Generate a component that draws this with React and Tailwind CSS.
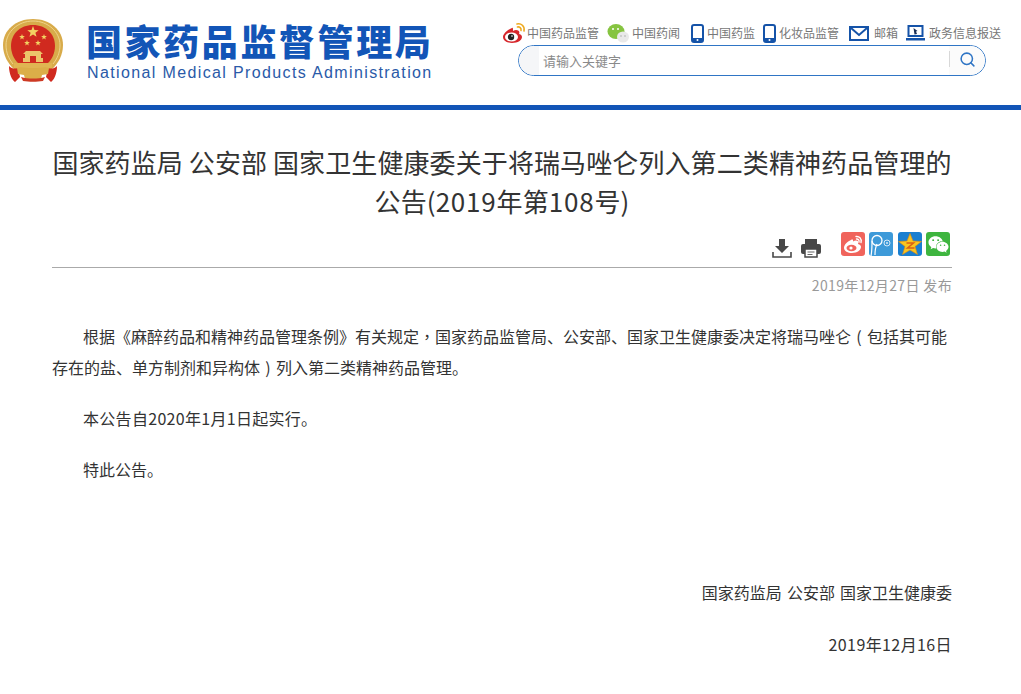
import { FaWeixin } from "react-icons/fa";
import { Search } from "lucide-react";

const cjk = "font-['Microsoft_YaHei','Noto_Sans_CJK_SC',sans-serif]";

// five pointed star, used by the emblem
const starPoints = (cx, cy, r) =>
    Array.from({ length: 10 }, (_, i) => {
        const radius = i % 2 === 0 ? r : r * 0.42;
        const angle = (Math.PI / 5) * i - Math.PI / 2;
        return `${cx + radius * Math.cos(angle)},${cy + radius * Math.sin(angle)}`;
    }).join(" ");

const Emblem = () => (
    <svg width="60" height="66" viewBox="0 0 60 66" className="shrink-0">
        <path d="M30 1C13 1 0 12 0 27c0 10 5 19 11 24h38c6-5 11-14 11-24C60 12 47 1 30 1z" fill="#d8ab4a" />
        <path d="M30 3C15 3 3 14 3 27c0 8 3 14 7 19" fill="none" stroke="#efd48a" strokeWidth="1" />
        <path d="M30 3c15 0 27 11 27 24 0 8-3 14-7 19" fill="none" stroke="#efd48a" strokeWidth="1" />
        <path d="M30 7C17 7 8 16 8 28c0 7 3 13 7 17h30c4-4 7-10 7-17C52 16 43 7 30 7z" fill="#d02a1f" />
        <polygon points={starPoints(30, 14, 6)} fill="#f2d262" />
        <polygon points={starPoints(19, 19, 3)} fill="#f2d262" />
        <polygon points={starPoints(41, 19, 3)} fill="#f2d262" />
        <polygon points={starPoints(24, 25, 3)} fill="#f2d262" />
        <polygon points={starPoints(35, 25, 3)} fill="#f2d262" />
        <path d="M20 44v-4h2v-4h-2l3-3h14l3 3h-2v4h2v4z" fill="#ecc56a" />
        <rect x="27" y="38" width="6" height="6" fill="#d02a1f" />
        <path d="M11 45h38v5H11z" fill="#e0b552" />
        <path d="M6 48c3 3 6 3 9 2l2 9-5 5c-3-2-6-8-6-16z" fill="#d02a1f" />
        <path d="M54 48c-3 3-6 3-9 2l-2 9 5 5c3-2 6-8 6-16z" fill="#d02a1f" />
        <path d="M14 50c5-2 11 1 16 0 5 1 11-2 16 0l-1 6-6 1-1 4H22l-1-4-6-1z" fill="#dbae48" />
        <path d="M18 59c7 2 17 2 24 0l-2 4c-6 1-14 1-20 0z" fill="#cd3a24" />
    </svg>
);

const Phone = () => (
    <svg width="13" height="19" viewBox="0 0 13 19" className="shrink-0">
        <rect x="1" y="1" width="11" height="17" rx="2" fill="#fff" stroke="#1553a8" strokeWidth="2" />
        <rect x="1" y="14" width="11" height="4" fill="#1553a8" />
        <circle cx="6.5" cy="16" r="1" fill="#fff" />
    </svg>
);

const Weibo = () => (
    <svg width="24" height="22" viewBox="0 0 24 22" className="shrink-0">
        <path d="M10 6C5 8 1 12 1 15c0 4 5 6 9 6 6 0 10-3 10-6 0-2-2-3-3-3 1-2 0-4-3-4-1 0-2 .5-3 1 0-2 0-4-1-3z" fill="#d6262b" />
        <ellipse cx="9.500" cy="15" rx="6.500" ry="4.500" fill="#fff" />
        <circle cx="9" cy="15" r="3.200" fill="#222" />
        <circle cx="10" cy="14" r=".8" fill="#fff" />
        <path d="M15 2c4-1 8 2 7 7M15.500 5c2-.5 4 1 3.500 3.500" fill="none" stroke="#eeaa1f" strokeWidth="1.600" strokeLinecap="round" />
    </svg>
);

const Wechat = () => (
    <svg width="23" height="21" viewBox="0 0 23 21" className="shrink-0">
        <ellipse cx="9" cy="8.500" rx="8.500" ry="7.500" fill="#86c440" />
        <circle cx="6" cy="6" r="1" fill="#fff" />
        <circle cx="11" cy="6" r="1" fill="#fff" />
        <ellipse cx="16" cy="14" rx="6" ry="5.500" fill="#e9e9e9" />
        <circle cx="14" cy="13" r=".8" fill="#aaa" />
        <circle cx="18" cy="13" r=".8" fill="#aaa" />
    </svg>
);

const Mail = () => (
    <svg width="20" height="15" viewBox="0 0 20 15" className="shrink-0">
        <rect x="1" y="1" width="18" height="13" fill="#fff" stroke="#1553a8" strokeWidth="2" />
        <path d="M2 2l8 7 8-7" fill="none" stroke="#1553a8" strokeWidth="2" />
    </svg>
);

const Laptop = () => (
    <svg width="19" height="17" viewBox="0 0 19 17" className="shrink-0">
        <rect x="2.500" y="1" width="14" height="10" fill="#fff" stroke="#1553a8" strokeWidth="2" />
        <path d="M7.500 3l4 3-1.500.5L11 9l-2.500.5z" fill="#1a2f55" />
        <rect x="0" y="13" width="19" height="2.500" fill="#1553a8" />
    </svg>
);

const TopLink = ({ icon, label, gap }) => (
    <a className={`flex items-center text-xs text-[#777] ${gap}`}>
        {icon}
        <span>{label}</span>
    </a>
);

const Header = () => (
    <header className="flex h-[105px]">
        <div className="w-[86px] shrink-0 pl-[3px] pt-[18px]">
            <Emblem />
        </div>
        <div className="w-[415px] shrink-0 pt-[17px]">
            <div className={`${cjk} h-[46px] text-[36px] leading-[46px] font-black tracking-[2.600px] whitespace-nowrap text-[#1255b7]`}>
                国家药品监督管理局
            </div>
            <div className="pl-px font-['Liberation_Sans',sans-serif] text-[16px] leading-[20px] tracking-[1.37px] whitespace-nowrap text-[#2a5aa8]">
                National Medical Products Administration
            </div>
        </div>
        <div className="pt-[21px]">
            <div className={`${cjk} flex h-[24px] items-center pl-px`}>
                <TopLink icon={<Weibo />} label="中国药品监管" gap="gap-px" />
                <TopLink icon={<Wechat />} label="中国药闻" gap="ml-[8px] gap-[2px]" />
                <TopLink icon={<Phone />} label="中国药监" gap="ml-[11px] gap-[3px]" />
                <TopLink icon={<Phone />} label="化妆品监管" gap="ml-[8px] gap-[3px]" />
                <TopLink icon={<Mail />} label="邮箱" gap="ml-[10px] gap-[5px]" />
                <TopLink icon={<Laptop />} label="政务信息报送" gap="ml-[8px] gap-[4px]" />
            </div>
            <div className="ml-[17px] flex h-[31px] w-[468px] items-center overflow-hidden rounded-full border border-[#2f75c5] bg-white">
                <span className="w-[20px] self-stretch bg-[#f5f6f8]" />
                <span className={`${cjk} w-[410px] pl-[4px] text-[13px] text-[#8a8a8a]`}>请输入关键字</span>
                <span className="flex flex-1 items-center self-stretch bg-[#fbfbfb] pb-[3px]">
                    <span className="h-[16px] w-px bg-[#d8d8d8]" />
                    <Search size={17} strokeWidth={2.2} className="ml-[9px] text-[#2f75c5]" />
                </span>
            </div>
        </div>
    </header>
);

const Download = () => (
    <svg width="20" height="20" viewBox="0 0 20 20">
        <path d="M7 1h6v7h4l-7 7-7-7h4z" fill="#484848" />
        <path d="M1 14v5h18v-5" fill="none" stroke="#484848" strokeWidth="1.600" />
    </svg>
);

const Printer = () => (
    <svg width="20" height="20" viewBox="0 0 20 20">
        <path d="M4 6V1h12v5z" fill="#484848" />
        <rect x="0" y="6" width="20" height="10" rx="2" fill="#484848" />
        <rect x="4" y="11" width="12" height="8" fill="#fff" stroke="#484848" strokeWidth="1.500" />
        <path d="M6.500 14h7M6.500 16.500h5" stroke="#666" strokeWidth="1" />
    </svg>
);

const ShareBox = ({ bg, children }) => (
    <span className={`flex h-[24px] w-[24px] items-center justify-center rounded-[3px] ${bg}`}>{children}</span>
);

const Tools = () => (
    <div className="flex h-[36px] items-start justify-end pr-[2px]">
        <div className="mt-[7px] flex items-center gap-[9px]">
            <Download />
            <Printer />
        </div>
        <div className="ml-[20px] flex gap-[4.300px] pt-[1px]">
            <ShareBox bg="bg-[#f0645c]">
                <svg width="24" height="24" viewBox="0 0 24 24">
                    <path d="M10 8C6 9.500 3 13 3 16c0 3 4 5 8 5 5 0 9-3 9-6 0-1.500-1-2.500-3-3 1-2 0-3.500-2-3.500-1 0-2 .5-3 1 .5-2-.5-2.500-2-1.500z" fill="#fff" />
                    <ellipse cx="10.500" cy="16" rx="5" ry="3.200" fill="#f0645c" />
                    <circle cx="10" cy="16" r="1.600" fill="#fff" />
                    <path d="M15 4.500c3-.5 6 2 5 6M15.500 7c1.500-.2 3 1 2.500 3" fill="none" stroke="#fff" strokeWidth="1.400" strokeLinecap="round" />
                </svg>
            </ShareBox>
            <ShareBox bg="bg-[#3d9ad9]">
                <svg width="24" height="24" viewBox="0 0 24 24">
                    <circle cx="8" cy="8.500" r="5" fill="none" stroke="#fff" strokeWidth="1.300" />
                    <path d="M3 9c0 6 0 10-1 15M6 23c0-5 1-9 2-11" fill="none" stroke="#fff" strokeWidth="1.200" />
                    <circle cx="18" cy="11" r="3" fill="none" stroke="#d5e9f8" strokeWidth="1" />
                    <circle cx="18" cy="11" r="1" fill="#d5e9f8" />
                </svg>
            </ShareBox>
            <ShareBox bg="bg-[#1a7fd0]">
                <svg width="24" height="24" viewBox="0 0 24 24">
                    <polygon points="12,1.500 15,9 23.500,9.500 17,14.500 19.500,22.500 12,18 4.500,22.500 7,14.500 .5,9.500 9,9" fill="#f9c520" stroke="#e08a12" strokeWidth=".6" />
                    <path d="M8.500 11h7l-6 5h7" fill="none" stroke="#d95f16" strokeWidth="1.500" />
                </svg>
            </ShareBox>
            <ShareBox bg="bg-[#3eb53f]">
                <FaWeixin size={21} color="#fff" />
            </ShareBox>
        </div>
    </div>
);

// comma and brackets sit in the middle of their cell in the original
const Comma = () => <span className="font-['Noto_Sans_CJK_TC',sans-serif]">，</span>;
const Bracket = ({ children }) => <span className="inline-block w-[1em] indent-0 text-center">{children}</span>;

const App = () => (
    <div className={`${cjk} min-h-[694px] bg-white`}>
        <Header />
        <div className="h-[5px] bg-[#1255b7]" />
        <main className="ml-[52px] w-[900px]">
            <h1 className="pt-[32px] text-center text-[26px] leading-[39px] font-normal tracking-[0.1px] text-[#333]">
                国家药监局 公安部 国家卫生健康委关于将瑞马唑仑列入第二类精神药品管理的
                <br />
                公告(<span className="tracking-[0.8px]">2019</span>年第<span className="tracking-[0.8px]">108</span>号)
            </h1>
            <div className="mt-[11px] border-b border-[#aaa]">
                <Tools />
            </div>
            <div className="pt-[7px] text-right text-[14px] leading-[20px] tracking-[0.35px] text-[#999]">2019年12月27日 发布</div>
            <div className="pt-[26px] text-[16px] leading-[31px] text-[#333]">
                <p className="indent-[31px]">
                    根据《麻醉药品和精神药品管理条例》有关规定<Comma />国家药品监管局、公安部、国家卫生健康委决定将瑞马唑仑<Bracket>(</Bracket>包括其可能存在的盐、单方制剂和异构体<Bracket>)</Bracket>列入第二类精神药品管理。
                </p>
                <p className="mt-[20px] indent-[31px] tracking-[0.3px]">本公告自2020年1月1日起实行。</p>
                <p className="mt-[20px] indent-[31px]">特此公告。</p>
                <p className="mt-[92px] text-right [word-spacing:1.5px]">国家药监局 公安部 国家卫生健康委</p>
                <p className="mt-[21px] text-right tracking-[0.4px]">2019年12月16日</p>
            </div>
        </main>
    </div>
);

export default App;
